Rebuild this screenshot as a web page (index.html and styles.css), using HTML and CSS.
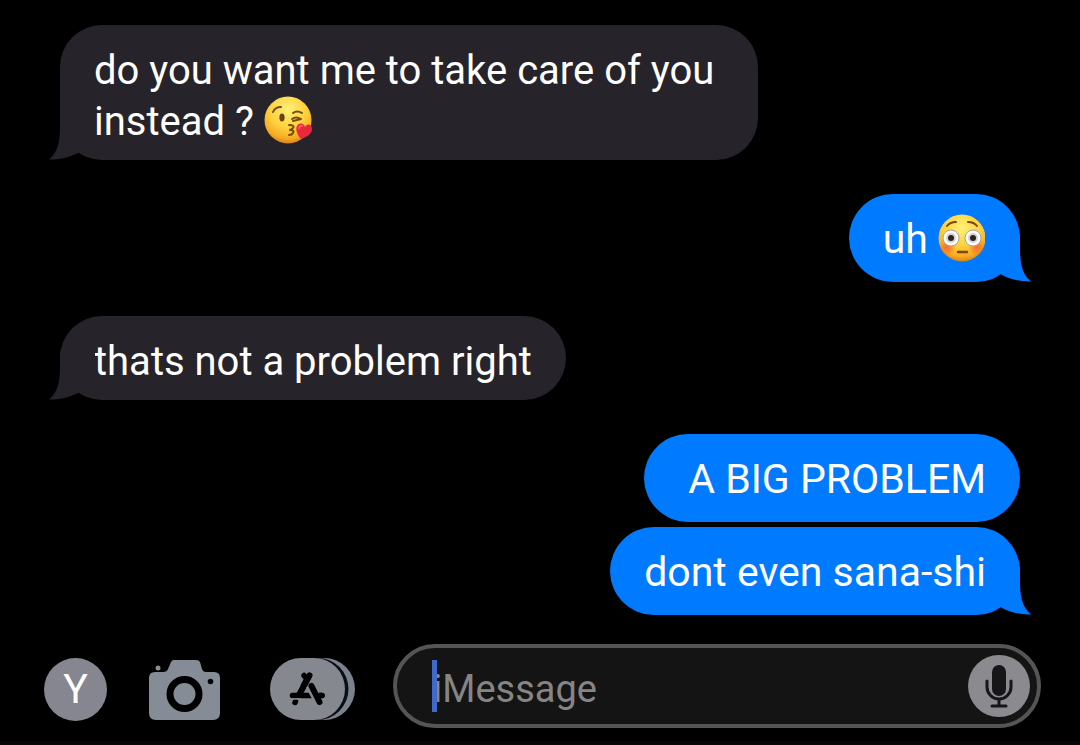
FILE: index.html
```html
<!DOCTYPE html>
<html lang="en">
<head>
    <meta charset="UTF-8">
    <meta name="viewport" content="width=device-width, initial-scale=1.0">
    <title>Messages</title>
    <link rel="stylesheet" href="styles.css">
</head>
<body>
    <!-- shared shapes -->
    <svg class="defs" width="0" height="0" aria-hidden="true">
        <symbol id="tail" viewBox="0 0 50 48">
            <path d="M11 0 V12 C11 28 10 39 0 47.5 C11 48 21 45 29 41 L46 20 V0 Z" />
        </symbol>
        <radialGradient id="face" cx="50%" cy="28%" r="72%">
            <stop offset="0" stop-color="#fff07a" />
            <stop offset="0.55" stop-color="#fdd03c" />
            <stop offset="0.85" stop-color="#f6ab22" />
            <stop offset="1" stop-color="#d9831a" />
        </radialGradient>
        <radialGradient id="blush">
            <stop offset="0" stop-color="#f4512c" stop-opacity="0.75" />
            <stop offset="1" stop-color="#f4512c" stop-opacity="0" />
        </radialGradient>
    </svg>

    <main class="chat">
        <div class="bubble received long">
            do you want me to take care of you<br>instead ?
            <svg class="emoji" viewBox="0 0 48 48" role="img" aria-label="face blowing a kiss">
                <circle cx="24" cy="24" r="23.5" fill="url(#face)" />
                <g fill="none" stroke="#7a4a0c" stroke-width="2" stroke-linecap="round" stroke-linejoin="round">
                    <path d="M9 16 Q11 11 17 11" />
                    <path d="M29 17 Q33 14 38 17" />
                    <path d="M28 23 Q32 20 37 23 Q33 24 29 25" />
                    <path d="M25 29 Q31 29 29 32 Q28 33 26 34 Q31 34 29 37 Q28 39 25 39" />
                </g>
                <ellipse cx="18" cy="21.5" rx="2.6" ry="4" fill="#6b400c" />
                <path d="M37 43 C34 40 31 34 33 30 C35 26 40 27 41 31 C43 27 48 28 48 33 C48 38 43 41 37 43 Z" fill="#e8283f" />
                <path d="M35 32 Q36 29 38 30" fill="none" stroke="#ff5c6c" stroke-width="2" stroke-linecap="round" />
            </svg>
            <svg class="tail" aria-hidden="true"><use href="#tail" /></svg>
        </div>

        <div class="bubble sent">
            uh
            <svg class="emoji" viewBox="0 0 48 48" role="img" aria-label="flushed face">
                <circle cx="24" cy="24" r="23.5" fill="url(#face)" />
                <circle cx="9" cy="33" r="9" fill="url(#blush)" />
                <circle cx="39" cy="33" r="9" fill="url(#blush)" />
                <g fill="none" stroke="#7a4a0c" stroke-width="2" stroke-linecap="round">
                    <path d="M9 12 Q12 8 18 8" />
                    <path d="M30 8 Q36 8 39 12" />
                </g>
                <circle cx="13" cy="24" r="8" fill="#fff" stroke="#a7a29a" stroke-width="1" />
                <circle cx="35" cy="24" r="8" fill="#fff" stroke="#a7a29a" stroke-width="1" />
                <circle cx="13" cy="24" r="5" fill="#d5d3d0" />
                <circle cx="35" cy="24" r="5" fill="#d5d3d0" />
                <circle cx="13" cy="24" r="3" fill="#2b2320" />
                <circle cx="35" cy="24" r="3" fill="#2b2320" />
                <path d="M20 38 H29" stroke="#80450f" stroke-width="2.5" stroke-linecap="round" />
            </svg>
            <svg class="tail" aria-hidden="true"><use href="#tail" /></svg>
        </div>

        <div class="bubble received">
            thats not a problem right
            <svg class="tail" aria-hidden="true"><use href="#tail" /></svg>
        </div>

        <div class="bubble sent first">A BIG PROBLEM</div>

        <div class="bubble sent grouped">
            dont even sana-shi
            <svg class="tail" aria-hidden="true"><use href="#tail" /></svg>
        </div>
    </main>

    <form class="composer">
        <button type="button" class="avatar">Y</button>

        <button type="button" class="icon-button camera" aria-label="Camera">
            <svg width="72" height="62" viewBox="0 0 72 62">
                <path d="M6 14 H14 Q18 14 19 11 L22 4 Q23 2 25 2 H47 Q50 2 51 4 L53 11 Q54 14 57 14 H65 Q71 14 71 20 V55 Q71 62 64 62 H7 Q0 62 0 55 V20 Q0 14 6 14 Z" fill="#858c95" />
                <circle cx="9" cy="10" r="2.5" fill="#858c95" />
                <circle cx="35.5" cy="36" r="14.5" fill="none" stroke="#000" stroke-width="7" />
                <circle cx="61.5" cy="23.5" r="2.8" fill="#000" />
            </svg>
        </button>

        <button type="button" class="icon-button" aria-label="Apps">
            <svg width="86" height="62" viewBox="0 0 86 62">
                <rect x="8" y="0" width="77" height="62" rx="31" fill="#7b828b" />
                <rect x="2" y="0" width="76.5" height="62" rx="31" fill="#090e17" />
                <rect x="0" y="0" width="75" height="62" rx="31" fill="#85888f" />
                <g stroke="#000" stroke-linecap="round" fill="none">
                    <path d="M39.5 17.5 L29.5 36" stroke-width="6" />
                    <path d="M34 17.5 L37 21" stroke-width="5.5" />
                    <path d="M22.500 37.5 H52" stroke-width="5.5" />
                    <path d="M25.5 43.5 L25 44.500" stroke-width="5.5" />
                </g>
                <path d="M39.5 27 L49 44" stroke="#85888f" stroke-width="9" />
                <path d="M41.5 28 L49.5 44" stroke="#000" stroke-width="6" stroke-linecap="round" />
                <path d="M36.500 22.500 L33 29" stroke="#000" stroke-width="6" />
                <path d="M50 37.500 H52" stroke="#000" stroke-width="5.5" stroke-linecap="round" />
                <path d="M21 41 H31" stroke="#85888f" stroke-width="1.500" />
            </svg>
        </button>

        <div class="field">
            <span class="caret"></span>
            <input type="text" placeholder="iMessage" aria-label="iMessage">
            <button type="button" class="mic" aria-label="Dictate">
                <svg width="62" height="62" viewBox="0 0 62 62">
                    <rect x="24" y="10" width="14" height="31" rx="7" fill="#161518" />
                    <path d="M19 26 V32 A12 12 0 0 0 43 32 V26 M31 45 V51 M24 51 H38" fill="none" stroke="#161518" stroke-width="3" stroke-linecap="round" />
                </svg>
            </button>
        </div>
    </form>
</body>
</html>
```
FILE: styles.css
```css
* {
    box-sizing: border-box;
}

body {
    display: flex;
    flex-direction: column;
    min-height: 100vh;
    margin: 0;
    background-color: #000;
    border-bottom: 4px solid #070506;
    color: #fff;
    font-family: Roboto, Inter, sans-serif;
    font-size: 41px;
    line-height: 51px;
}

button {
    flex-shrink: 0;
    padding: 0;
    border: 0;
    background: none;
    font: inherit;
}

.defs {
    position: absolute;
}

.chat {
    display: flex;
    flex: 1;
    flex-direction: column;
    gap: 34px;
    padding: 25px 60px 29px;
}

.bubble {
    position: relative;
    padding: 20px 34px 13px;
    border-radius: 42px;
}

.received {
    align-self: flex-start;
    background-color: #26242a;
    font-size: 40px;
}

.long {
    padding-right: 44px;
}

.sent {
    align-self: flex-end;
    padding: 20px 34px 17px;
    background-color: #007aff;
    border-radius: 44px;
}

.first {
    padding-left: 44px;
}

/* second bubble of the same sender sits close to the first */
.grouped {
    margin-top: -29px;
}

.emoji {
    width: 48px;
    height: 48px;
    margin: -9px 0;
}

.tail {
    position: absolute;
    bottom: 0;
    left: -11px;
    width: 50px;
    height: 48px;
    fill: #26242a;
}

.sent .tail {
    right: -11px;
    left: auto;
    fill: #007aff;
    transform: scaleX(-1);
}

.composer {
    display: flex;
    align-items: center;
    padding: 0 39px 13px 44px;
}

.avatar {
    width: 63px;
    height: 63px;
    margin-top: 6px;
    margin-right: 42px;
    border-radius: 50%;
    background-color: #858690;
    color: #fff;
}

.icon-button {
    display: flex;
    margin-top: 6px;
}

.camera {
    margin-right: 49px;
}

.field {
    position: relative;
    display: flex;
    flex: 1;
    align-items: center;
    min-width: 0;
    height: 84px;
    margin-left: 37px;
    padding: 0 7px 0 36px;
    border: 4px solid #555;
    border-radius: 42px;
    background-color: #141414;
}

.field input {
    flex: 1;
    min-width: 0;
    padding: 6px 0 0;
    border: 0;
    outline: 0;
    background: none;
    color: #fff;
    font: inherit;
    font-size: 38px;
}

.field input::placeholder {
    color: #858585;
    opacity: 1;
}

.caret {
    position: absolute;
    left: 35px;
    width: 5px;
    height: 52px;
    background-color: #3e6acb;
}

.mic {
    display: flex;
    border-radius: 50%;
    background-color: #8b8a8f;
}
```
